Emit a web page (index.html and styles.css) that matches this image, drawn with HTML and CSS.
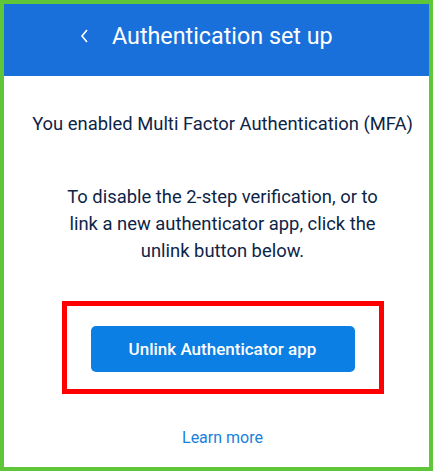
FILE: index.html
```html
<!DOCTYPE html>
<html lang="en">
<head>
    <meta charset="UTF-8">
    <meta name="viewport" content="width=device-width, initial-scale=1.0">
    <title>Authentication set up</title>
    <link rel="stylesheet" href="styles.css">
</head>
<body>
    <div class="frame">
        <header class="header">
            <svg class="back" width="10" height="16" viewBox="0 0 10 16">
                <polyline points="7,2 2,8 7,14" fill="none" stroke="#fff" stroke-width="1.6"/>
            </svg>
            <h1>Authentication set up</h1>
        </header>
        <div class="content">
            <p class="intro">You enabled Multi Factor Authentication (MFA)</p>
            <p class="info">To disable the 2-step verification, or to link a new authenticator app, click the unlink button below.</p>
            <div class="highlight">
                <button class="unlink">Unlink Authenticator app</button>
            </div>
            <a class="learn" href="#">Learn more</a>
        </div>
    </div>
</body>
</html>
```

FILE: styles.css
```css
body {
    margin: 0;
    font-family: Roboto, "Liberation Sans", sans-serif;
    background-color: #fff;
}

.frame {
    height: 471px;
    box-sizing: border-box;
    border: 4px solid #5fc63a; /* green outline */
    display: flex;
    flex-direction: column;
}

.header {
    height: 72px;
    box-sizing: border-box;
    flex-shrink: 0;
    background-color: #1a70da;
    display: flex;
    align-items: center;
    padding: 0 0 8px 76px;
    gap: 22px;
}

.header h1 {
    margin: 0;
    font-size: 23.3px;
    font-weight: 400;
    color: #fff;
}

.content {
    padding-left: 12px;
    display: flex;
    flex-direction: column;
    align-items: center;
    text-align: center;
    color: #0e2447;
}

.intro {
    margin: 34px 0 0;
    font-size: 18.4px;
    line-height: 27px;
    white-space: nowrap;
}

.info {
    margin: 46px 0 0;
    width: 330px;
    font-size: 18.4px;
    line-height: 27px;
}

.highlight {
    margin-top: 37px;
    width: 322px;
    box-sizing: border-box;
    border: 5px solid #f00;
    padding: 20px 0 17px;
    display: flex;
    justify-content: center;
}

.unlink {
    width: 264px;
    height: 46px;
    border: none;
    border-radius: 5px;
    background-color: #0b7fe3;
    color: #fff;
    font-family: inherit;
    font-size: 17px;
    font-weight: 500;
}

.learn {
    margin-top: 32px;
    font-size: 16px;
    line-height: 24px;
    color: #1a7fdc;
    text-decoration: none;
}
```
